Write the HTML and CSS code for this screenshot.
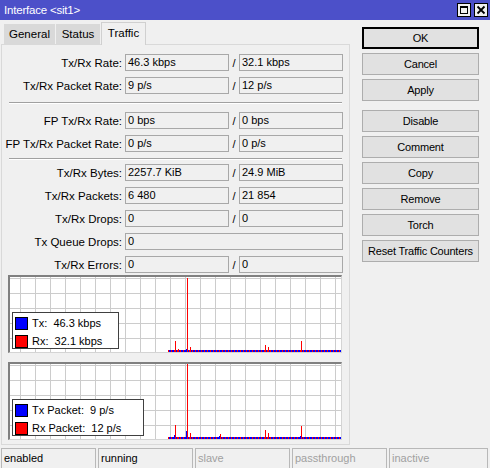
FILE: index.html
```html
<!DOCTYPE html>
<html>
<head>
<meta charset="utf-8">
<link rel="stylesheet" href="styles.css">
</head>
<body>
<div class="window">
  <div class="titlebar">
    <span class="title">Interface &lt;sit1&gt;</span>
    <div class="tb-buttons">
      <span class="tb-btn"><svg width="14" height="14" viewBox="0 0 14 14"><rect x="3.5" y="3.5" width="7" height="7" fill="none" stroke="#000"/><rect x="3" y="3" width="8" height="2" fill="#000"/></svg></span>
      <span class="tb-btn"><svg width="14" height="14" viewBox="0 0 14 14"><path d="M3.5 3.5 L10.5 10.5 M10.5 3.5 L3.5 10.5" stroke="#000" stroke-width="1.8"/></svg></span>
    </div>
  </div>
  <div class="main">
    <div class="left">
      <div class="tabs">
        <div class="tab tab-general">General</div>
        <div class="tab tab-status">Status</div>
        <div class="tab tab-traffic active">Traffic</div>
      </div>
      <div class="panel">
        <div class="row"><span class="label">Tx/Rx Rate:</span><span class="field">46.3 kbps</span><span class="slash">/</span><span class="field">32.1 kbps</span></div>
        <div class="row"><span class="label">Tx/Rx Packet Rate:</span><span class="field">9 p/s</span><span class="slash">/</span><span class="field">12 p/s</span></div>
        <div class="sep sep1"></div>
        <div class="row"><span class="label">FP Tx/Rx Rate:</span><span class="field">0 bps</span><span class="slash">/</span><span class="field">0 bps</span></div>
        <div class="row"><span class="label">FP Tx/Rx Packet Rate:</span><span class="field">0 p/s</span><span class="slash">/</span><span class="field">0 p/s</span></div>
        <div class="sep sep2"></div>
        <div class="row"><span class="label">Tx/Rx Bytes:</span><span class="field">2257.7 KiB</span><span class="slash">/</span><span class="field">24.9 MiB</span></div>
        <div class="row"><span class="label">Tx/Rx Packets:</span><span class="field">6 480</span><span class="slash">/</span><span class="field">21 854</span></div>
        <div class="row"><span class="label">Tx/Rx Drops:</span><span class="field">0</span><span class="slash">/</span><span class="field">0</span></div>
        <div class="row"><span class="label">Tx Queue Drops:</span><span class="field field-wide">0</span></div>
        <div class="row"><span class="label">Tx/Rx Errors:</span><span class="field">0</span><span class="slash">/</span><span class="field">0</span></div>

        <div class="chart chart1">
          <svg class="bars" width="331" height="75" viewBox="0 0 331 75">
            <defs>
              <pattern id="dash" width="3" height="2" patternUnits="userSpaceOnUse">
                <rect x="0" y="0" width="2" height="2" fill="#0000ff"/>
                <rect x="2" y="0" width="1" height="2" fill="#ff0000"/>
              </pattern>
            </defs>
            <rect x="158" y="73" width="173" height="2" fill="url(#dash)"/>
            <rect x="165" y="64" width="1" height="11" fill="#ff0000"/>
            <rect x="168" y="72" width="1" height="3" fill="#ff0000"/>
            <rect x="176" y="72" width="1" height="3" fill="#0000ff"/>
            <rect x="177" y="1" width="1" height="74" fill="#ff0000"/>
            <rect x="180" y="70" width="1" height="5" fill="#ff0000"/>
            <rect x="255" y="68" width="1" height="7" fill="#ff0000"/>
            <rect x="258" y="70" width="1" height="5" fill="#ff0000"/>
            <rect x="291" y="64" width="1" height="11" fill="#ff0000"/>
          </svg>
          <div class="legend legend1">
            <div class="lg-row"><span class="sq blue"></span><span class="lg-text">Tx:  46.3 kbps</span></div>
            <div class="lg-row"><span class="sq red"></span><span class="lg-text">Rx:  32.1 kbps</span></div>
          </div>
        </div>

        <div class="chart chart2">
          <svg class="bars" width="331" height="75" viewBox="0 0 331 75">
            <defs>
              <pattern id="dash2" width="3" height="2" patternUnits="userSpaceOnUse">
                <rect x="0" y="0" width="2" height="2" fill="#0000ff"/>
                <rect x="2" y="0" width="1" height="2" fill="#ff0000"/>
              </pattern>
            </defs>
            <rect x="158" y="73" width="173" height="2" fill="url(#dash2)"/>
            <rect x="164" y="71" width="1" height="4" fill="#0000ff"/>
            <rect x="165" y="61" width="1" height="14" fill="#ff0000"/>
            <rect x="168" y="73" width="1" height="2" fill="#ff0000"/>
            <rect x="176" y="67" width="1" height="8" fill="#0000ff"/>
            <rect x="177" y="0" width="1" height="75" fill="#ff0000"/>
            <rect x="180" y="69" width="1" height="6" fill="#ff0000"/>
            <rect x="209" y="72" width="1" height="3" fill="#0000ff"/>
            <rect x="210" y="70" width="1" height="5" fill="#ff0000"/>
            <rect x="255" y="66" width="1" height="9" fill="#ff0000"/>
            <rect x="258" y="69" width="1" height="6" fill="#ff0000"/>
            <rect x="290" y="72" width="1" height="3" fill="#0000ff"/>
            <rect x="291" y="62" width="1" height="13" fill="#ff0000"/>
          </svg>
          <div class="legend legend2">
            <div class="lg-row"><span class="sq blue"></span><span class="lg-text">Tx Packet:  9 p/s</span></div>
            <div class="lg-row"><span class="sq red"></span><span class="lg-text">Rx Packet:  12 p/s</span></div>
          </div>
        </div>
      </div>
    </div>
    <div class="buttons">
      <div class="btn default">OK</div>
      <div class="btn">Cancel</div>
      <div class="btn">Apply</div>
      <div class="btn group-start">Disable</div>
      <div class="btn">Comment</div>
      <div class="btn">Copy</div>
      <div class="btn">Remove</div>
      <div class="btn">Torch</div>
      <div class="btn">Reset Traffic Counters</div>
    </div>
  </div>
  <div class="statusbar">
    <div class="status">enabled</div>
    <div class="status">running</div>
    <div class="status off">slave</div>
    <div class="status off">passthrough</div>
    <div class="status off last">inactive</div>
  </div>
</div>
</body>
</html>
```
FILE: styles.css
```css
* { box-sizing: border-box; }
html, body { margin: 0; padding: 0; }
body {
  width: 490px;
  height: 468px;
  overflow: hidden;
  background: #f0f0f0;
  font-family: "Liberation Sans", Arial, sans-serif;
  font-size: 11px;
  color: #000;
}
.window { display: flex; flex-direction: column; height: 468px; }

.titlebar {
  height: 20px;
  flex: none;
  background: #4c50c9;
  color: #fff;
  display: flex;
  align-items: center;
  justify-content: space-between;
  padding: 0 2px 0 4px;
}
.title { font-size: 11.5px; letter-spacing: -0.2px; }
.tb-buttons { display: flex; gap: 3px; }
.tb-btn {
  width: 14px; height: 14px;
  background: #f0f0f0;
  border: 1px solid #000;
  display: flex; align-items: center; justify-content: center;
  overflow: hidden;
}
.tb-btn svg { display: block; flex: none; margin: -1px; }

.main { display: flex; height: 428px; flex: none; }
.left { width: 349px; margin-left: 1px; display: flex; flex-direction: column; }

.tabs { display: flex; height: 24px; padding-left: 3px; align-items: flex-end; flex: none; font-size: 11.5px; }
.tab {
  height: 20px;
  border: 1px solid #d9d9d9;
  border-bottom: none;
  background: #d9d9d9;
  text-align: center;
  line-height: 19px;
  margin-right: 1px;
}
.tab-general { width: 51px; }
.tab-status { width: 44px; }
.tab-traffic { width: 45px; }
.tab.active {
  height: 23px;
  background: #f0f0f0;
  border-color: #d0d0d0;
  margin-bottom: -1px;
  position: relative;
  z-index: 1;
  line-height: 21px;
}

.panel {
  flex: none;
  height: 401px;
  border: 1px solid #d9d9d9;
  padding-top: 9px;
  display: flex;
  flex-direction: column;
}
.row { display: flex; align-items: center; height: 17px; flex: none; }
.row + .row { margin-top: 6px; }
.label { width: 123px; text-align: right; padding-right: 3px; white-space: nowrap; font-size: 11.5px; }
.field {
  width: 104px;
  height: 17px;
  border: 1px solid #a8a8a8;
  padding-left: 2px;
  line-height: 15px;
  white-space: nowrap;
}
.field-wide { width: 218px; }
.slash { width: 10px; text-align: center; font-size: 11px; }

.sep {
  height: 2px;
  margin-left: 7px;
  width: 333px;
  border-top: 1px solid #a0a0a0;
  border-bottom: 1px solid #fff;
  flex: none;
}
.sep1 { margin-top: 8px; margin-bottom: 8px; }
.sep2 { margin-top: 6px; margin-bottom: 4px; }

.chart {
  position: relative;
  flex: none;
  margin-left: 6px;
  width: 334px;
  height: 78px;
  border-style: solid;
  border-width: 2px 1px 1px 2px;
  border-color: #808080 #d4d4d4 #d4d4d4 #808080;
  background-color: #fff;
  background-image:
    linear-gradient(to right, #cccccc 1px, transparent 1px),
    linear-gradient(to bottom, #cccccc 1px, transparent 1px);
  background-size: 15px 15px;
  background-position: 10px 1px;
}
.chart1 { margin-top: 2px; }
.chart2 { margin-top: 9px; }
.bars { display: block; }

.legend {
  position: absolute;
  left: 2px;
  top: 35px;
  height: 37px;
  background: #fff;
  border: 1px solid #404040;
  padding: 4px 0 0 2px;
  display: flex;
  flex-direction: column;
  gap: 5px;
}
.legend1 { width: 107px; }
.legend2 { width: 132px; }
.lg-row { display: flex; align-items: center; height: 13px; }
.sq { width: 13px; height: 13px; border: 1px solid #000; flex: none; margin-right: 4px; }
.sq.blue { background: #0000ff; }
.sq.red { background: #ff0000; }
.lg-text { white-space: pre; font-size: 11px; line-height: 13px; }

.buttons {
  margin-left: 12px;
  padding-top: 7px;
  display: flex;
  flex-direction: column;
  gap: 4px;
  width: 117px;
}
.btn {
  height: 22px;
  border: 1px solid #adadad;
  background: #e1e1e1;
  text-align: center;
  line-height: 20px;
  white-space: nowrap;
  letter-spacing: -0.2px;
}
.btn.default { border-color: #000; box-shadow: inset 0 0 0 1px #000; }
.btn.group-start { margin-top: 5px; }

.statusbar { height: 20px; flex: none; display: flex; gap: 2px; padding-left: 1px; }
.status {
  width: 95px;
  height: 21px;
  border: 1px solid #b8b8b8;
  padding-left: 2px;
  line-height: 19px;
}
.status.off { color: #a0a0a0; }
.status.last { width: 99px; }
```
